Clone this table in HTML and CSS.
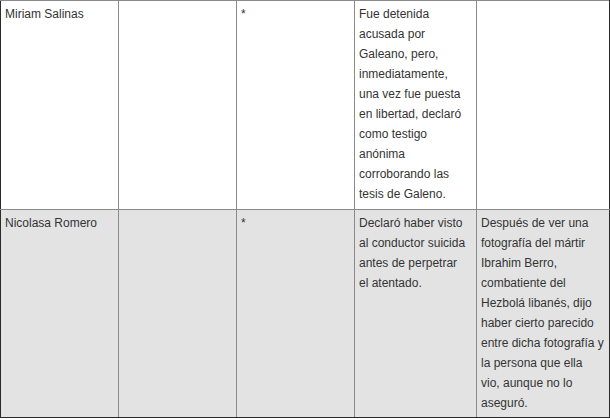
FILE: index.html
```html
<!DOCTYPE html>
<html lang="es">
<head>
<meta charset="utf-8">
<title>Testigos</title>
<link rel="stylesheet" href="styles.css">
</head>
<body>
<table class="grid">
  <colgroup>
    <col class="c1"><col class="c2"><col class="c3"><col class="c4"><col class="c5">
  </colgroup>
  <tbody>
    <tr class="row">
      <td>Miriam Salinas</td>
      <td></td>
      <td>*</td>
      <td class="desc">Fue detenida acusada por Galeano, pero, inmediatamente, una vez fue puesta en libertad, declaró como testigo anónima corroborando las tesis de Galeno.</td>
      <td></td>
    </tr>
    <tr class="row alt">
      <td>Nicolasa Romero</td>
      <td></td>
      <td>*</td>
      <td class="desc">Declaró haber visto al conductor suicida antes de perpetrar el atentado.</td>
      <td>Después de ver una fotografía del mártir Ibrahim Berro, combatiente del Hezbolá libanés, dijo haber cierto parecido entre dicha fotografía y la persona que ella vio, aunque no lo aseguró.</td>
    </tr>
  </tbody>
</table>
</body>
</html>
```
FILE: styles.css
```css
html, body {
  margin: 0;
  padding: 0;
  background: #ffffff;
}
.grid {
  border-collapse: collapse;
  table-layout: fixed;
  width: 609px;
  font-family: "Liberation Sans", Arial, sans-serif;
  font-size: 12px;
  line-height: 20px;
  color: #333333;
  border-left: 1px solid #2a2a2a;
  border-right: 1px solid #2a2a2a;
  border-bottom: 1px solid #2a2a2a;
}
.c1, .c2, .c3 { width: 118px; }
.c4 { width: 122px; }
.c5 { width: 133px; }
.grid td {
  border: 1px solid #8a8a8a;
  padding: 3px 5px 4px 4px;
  vertical-align: top;
}
.grid tr:first-child td { border-top: 1px solid #8a8a8a; padding-bottom: 5px; }
.grid td.desc { padding-right: 9px; }
.grid td:first-child { border-left: 1px solid #2a2a2a; }
.grid td:last-child { border-right: 1px solid #2a2a2a; }
.grid tr:last-child td { border-bottom: 1px solid #2a2a2a; }
.alt td { background: #e3e3e3; }
```
